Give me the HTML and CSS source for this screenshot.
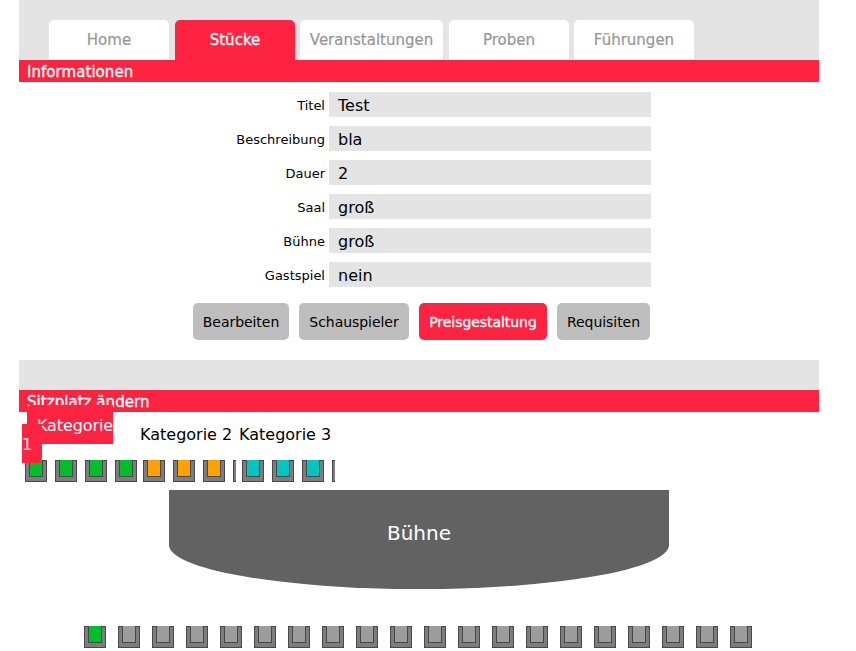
FILE: index.html
```html
<!DOCTYPE html>
<html lang="de">
<head>
<meta charset="utf-8">
<title>Stücke</title>
<link rel="stylesheet" href="styles.css">
</head>
<body>
<main class="page">
  <nav class="tabs">
    <a class="tab">Home</a>
    <a class="tab active">Stücke</a>
    <a class="tab wide">Veranstaltungen</a>
    <a class="tab">Proben</a>
    <a class="tab">Führungen</a>
  </nav>
  <h2 class="bar">Informationen</h2>
  <dl class="info">
    <dt>Titel</dt><dd>Test</dd>
    <dt>Beschreibung</dt><dd>bla</dd>
    <dt>Dauer</dt><dd>2</dd>
    <dt>Saal</dt><dd>groß</dd>
    <dt>Bühne</dt><dd>groß</dd>
    <dt>Gastspiel</dt><dd>nein</dd>
  </dl>
  <div class="actions">
    <a class="btn b1">Bearbeiten</a>
    <a class="btn b2">Schauspieler</a>
    <a class="btn b3 active">Preisgestaltung</a>
    <a class="btn b4">Requisiten</a>
  </div>
  <div class="spacer"></div>
  <h2 class="bar">Sitzplatz ändern</h2>
  <section class="categories">
    <div class="cat cat1">
      <div class="cat-name"><span class="chip-top">Kategorie</span><span class="chip-bottom">1</span></div>
      <div class="seats"><i class="seat green"></i><i class="seat green"></i><i class="seat green"></i><i class="seat green"></i></div>
    </div>
    <div class="cat cat2">
      <div class="cat-name">Kategorie 2</div>
      <div class="seats"><i class="seat orange"></i><i class="seat orange"></i><i class="seat orange"></i><i class="seat orange"></i></div>
    </div>
    <div class="cat cat3">
      <div class="cat-name">Kategorie 3</div>
      <div class="seats"><i class="seat cyan"></i><i class="seat cyan"></i><i class="seat cyan"></i><i class="seat cyan"></i></div>
    </div>
  </section>
  <div class="stage">Bühne</div>
  <div class="row">
    <i class="seat green"></i><i class="seat"></i><i class="seat"></i><i class="seat"></i><i class="seat"></i><i class="seat"></i><i class="seat"></i><i class="seat"></i><i class="seat"></i><i class="seat"></i><i class="seat"></i><i class="seat"></i><i class="seat"></i><i class="seat"></i><i class="seat"></i><i class="seat"></i><i class="seat"></i><i class="seat"></i><i class="seat"></i><i class="seat"></i>
  </div>
</main>
</body>
</html>
```
FILE: styles.css
```css
*, *::before { box-sizing: border-box; }
html { overflow: hidden; }
body { margin: 0; background: #fff; color: #000; font: 16px/22px Verdana, "DejaVu Sans", sans-serif; }
.page { width: 800px; margin-left: 19px; height: 651px; overflow: hidden; }
.tabs { display: flex; height: 60px; padding: 20px 0 0 30px; background: #e4e4e4; }
.tab { width: 120px; height: 40px; margin-right: 5px; border-radius: 5px 5px 0 0; background: #fff; color: #969696; font-size: 15px; text-align: center; line-height: 41px; white-space: nowrap; -webkit-text-stroke: 0.2px; }
.tab:first-child, .tab.wide { margin-right: 6px; }
.tab.wide { width: 143px; }
.tab.active { background: #fe2341; color: #fff; }
.bar { height: 22px; margin: 0; padding-left: 8px; background: #fe2341; color: #fff; font-size: 15px; font-weight: 400; line-height: 24px; letter-spacing: 0.05px; }
.bar, .btn.active, .tab.active { -webkit-text-stroke: 0.35px; }
.info { display: grid; grid-template-columns: 306px 322px; grid-auto-rows: 25px; gap: 9px 4px; margin: 10px 0 0; }
.info dt { text-align: right; font-size: 13px; line-height: 27px; }
.info dd { margin: 0; padding-left: 9px; background: #e4e4e4; line-height: 28px; }
.actions { display: flex; gap: 10px; margin: 16px 0 20px 174px; height: 37px; }
.btn { border-radius: 5px; background: #bebebe; font-size: 14px; line-height: 39px; text-align: center; white-space: nowrap; letter-spacing: -0.05px; }
.btn.active { background: #fe2341; color: #fff; }
.b1 { width: 96px; }
.b2 { width: 110px; }
.b3 { width: 128px; }
.b4 { width: 93px; }
.spacer { height: 30px; background: #e4e4e4; }
.categories { display: flex; height: 78px; }
.cat1 { width: 118px; }
.cat2, .cat3 { width: 99px; }
.cat-name { position: relative; height: 48px; padding-left: 3px; line-height: 46px; white-space: nowrap; }
.chip-top, .chip-bottom { position: absolute; background: #fe2341; color: #fff; }
.chip-top { left: 8px; top: -7px; width: 86px; height: 39px; padding-left: 10px; line-height: 41px; letter-spacing: -0.1px; border-radius: 5px 0 0 0; }
.chip-bottom { left: 3px; top: 12px; width: 20px; height: 39px; line-height: 41px; border-radius: 0 0 5px 0; }
.seats { display: flex; gap: 8px; padding-left: 6px; overflow: hidden; }
.seat { flex: none; width: 22px; height: 22px; border: 1px solid #484848; background: #7d7d7d; }
.seat::before { content: ""; display: block; width: 14px; height: 17px; margin: -1px 0 0 3px; border: 1px solid #484848; border-top: 0; background: #9c9c9c; }
.seat.green::before { background: #00bd2b; }
.seat.orange::before { background: #ffa200; }
.seat.cyan::before { background: #00c5c3; }
.stage { width: 500px; height: 99px; margin-left: 150px; border-radius: 0 0 50% 50% / 0 0 44px 44px; background: #626262; color: #fff; font-size: 20px; line-height: 86px; text-align: center; }
.row { display: flex; gap: 12px; margin: 37px 0 0 65px; }
```
